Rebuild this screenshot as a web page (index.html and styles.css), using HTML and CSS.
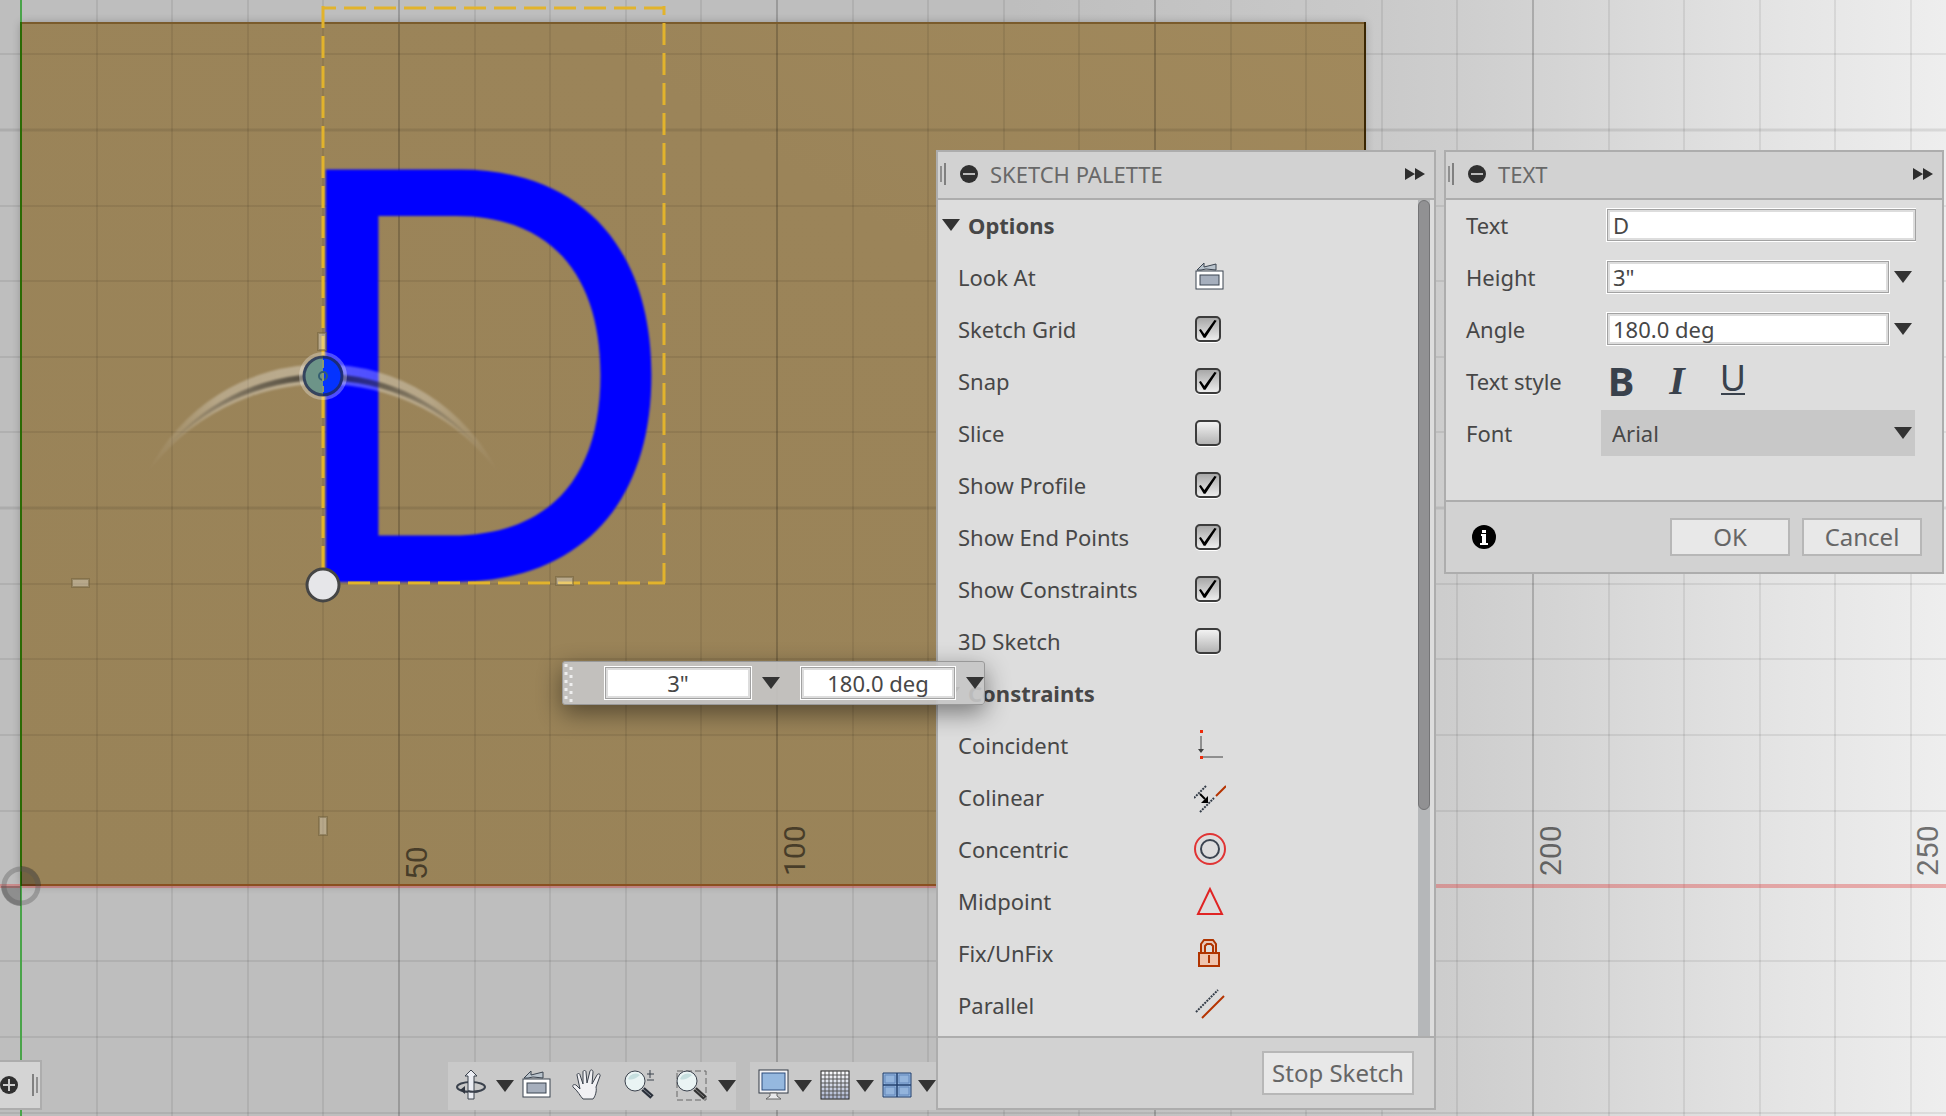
FILE: index.html
```html
<!DOCTYPE html>
<html lang="en">
<head>
<meta charset="utf-8">
<title>Sketch</title>
<link rel="stylesheet" href="styles.css">
</head>
<body>
<main class="workspace">
  <svg class="scene" aria-label="Sketch canvas">
    <defs>
      <linearGradient id="stock" x1="0" y1="1" x2="1" y2="0"><stop offset="0" stop-color="#998358"/><stop offset=".7" stop-color="#9b8459"/><stop offset="1" stop-color="#a1895c"/></linearGradient>
      <linearGradient id="arc" gradientUnits="userSpaceOnUse" x1="147" y1="0" x2="499" y2="0"><stop offset="0" stop-color="#fff" stop-opacity="0"/><stop offset=".2" stop-color="#fff" stop-opacity=".28"/><stop offset=".5" stop-color="#fff" stop-opacity=".34"/><stop offset=".8" stop-color="#fff" stop-opacity=".28"/><stop offset="1" stop-color="#fff" stop-opacity="0"/></linearGradient>
      <linearGradient id="core" gradientUnits="userSpaceOnUse" x1="160" y1="0" x2="486" y2="0"><stop offset="0" stop-opacity="0"/><stop offset=".3" stop-opacity=".4"/><stop offset=".5" stop-opacity=".6"/><stop offset=".7" stop-opacity=".4"/><stop offset="1" stop-opacity="0"/></linearGradient>
      <filter id="shade" x="-5%" y="-5%" width="110%" height="110%"><feGaussianBlur stdDeviation="5"/></filter>
      <filter id="soft"><feGaussianBlur stdDeviation="1"/></filter>
    </defs>
    <rect x="21" y="23" width="1344" height="862" fill="#000" opacity=".25" filter="url(#shade)"/>
    <rect x="21" y="22" width="1344" height="864" fill="url(#stock)"/>
    <path class="grid" d="M97 0V1200M172 0V1200M248 0V1200M323 0V1200M475 0V1200M550 0V1200M626 0V1200M701 0V1200M853 0V1200M928 0V1200M1004 0V1200M1079 0V1200M1231 0V1200M1306 0V1200M1382 0V1200M1457 0V1200M1609 0V1200M1684 0V1200M1760 0V1200M1835 0V1200M1911 0V1200"/>
    <path class="grid" d="M0 54H2400M0 206H2400M0 281H2400M0 357H2400M0 432H2400M0 584H2400M0 659H2400M0 735H2400M0 811H2400M0 961H2400M0 1037H2400M0 1113H2400"/>
    <path class="grid wide" d="M0 130H2400M0 508H2400"/>
    <path class="grid major" d="M399 0V1200M777 0V1200M1155 0V1200M1533 0V1200"/>
    <path d="M21 23H1365" stroke="#7a5b2c" stroke-width="2"/>
    <path d="M1365 22V886" stroke="#3a2602" stroke-width="2"/>
    <path d="M0 886H2400" stroke="#e03030" stroke-opacity=".35" stroke-width="4"/>
    <path d="M21 885H1365" stroke="#8a5020" stroke-width="2"/>
    <path d="M21 0V1200" stroke="#4aa44a" stroke-width="2"/>
    <path d="M21 22V886" stroke="#2a6a04" stroke-width="2"/>
    <g fill="#000" fill-opacity=".25"><path d="M21 886V866A20 20 0 0 1 41 886Z"/><path d="M21 886V906A20 20 0 0 1 1 886Z"/></g>
    <circle cx="21" cy="886" r="17" fill="none" stroke="#555" stroke-opacity=".35" stroke-width="5"/>
    <g class="ruler">
      <text transform="translate(427 880) rotate(-90)">50</text>
      <text transform="translate(805 876) rotate(-90)">100</text>
      <text transform="translate(1561 876) rotate(-90)">200</text>
      <text transform="translate(1938 876) rotate(-90)">250</text>
    </g>
    <text class="sketch-text" x="276" y="582" filter="url(#soft)">D</text>
    <g class="bounds">
      <path d="M323 6V583"/><path d="M322 8H665" stroke-dashoffset="8"/><path d="M664 6V583" stroke-dashoffset="13"/><path d="M322 583H665" stroke-dashoffset="4"/>
    </g>
    <g class="hint"><rect x="72" y="579" width="17" height="8"/><rect x="556" y="577" width="17" height="8"/><rect x="318" y="333" width="8" height="17"/><rect x="319" y="817" width="8" height="18"/></g>
    <path d="M147 474A196 196 0 0 1 499 474A217 217 0 0 0 147 474Z" fill="url(#arc)" filter="url(#soft)"/>
    <path d="M160 456A203 203 0 0 1 486 456A213 213 0 0 0 160 456Z" fill="url(#core)" filter="url(#soft)"/>
    <circle cx="323" cy="376" r="24" fill="#fff" fill-opacity=".3"/>
    <path d="M323 356A20 20 0 0 0 323 396Z" fill="#6d9488"/><path d="M323 356A20 20 0 0 1 323 396Z" fill="#0433ff"/>
    <circle cx="323" cy="376" r="19" fill="none" stroke="#222a50" stroke-opacity=".75" stroke-width="3"/>
    <circle cx="323" cy="376" r="4" fill="none" stroke="#345e70" stroke-width="2"/><path d="M323 360V392" stroke="#8a9a70" stroke-width="2" stroke-dasharray="8 5"/>
    <circle cx="323" cy="585" r="16" fill="#e6e6e9" stroke="#454545" stroke-width="3"/>
  </svg>

  <footer class="dock">
    <aside class="collapsed">
      <button class="round" aria-label="Expand browser"><svg width="18" height="18"><circle cx="9" cy="9" r="9" fill="#303030"/><path d="M3 9H15M9 3V15" stroke="#ccc" stroke-width="2"/></svg></button>
      <i class="grip flip"></i>
    </aside>
    <nav class="tools">
      <div class="group">
        <button class="tool" aria-label="Orbit"><svg width="32" height="32" viewBox="0 0 32 32"><ellipse cx="16" cy="18" rx="14" ry="5" fill="none" stroke="#3b424d" stroke-width="2"/><path d="M16 1L10 7H13V30H19V7H22Z" fill="#eceef4" stroke="#3b424d"/><path d="M13 22C16 23 20 23 24 22" fill="none" stroke="#3b424d" stroke-width="2"/><path d="M5 21L10 17V25Z" fill="#303640"/></svg></button>
        <button class="caret" aria-label="Orbit options"></button>
        <button class="tool" aria-label="Look At"><svg width="32" height="32" viewBox="0 0 32 32"><use href="#look"/></svg></button>
        <button class="tool mid" aria-label="Pan"><svg width="32" height="32" viewBox="0 0 32 32"><path d="M12 30C9 27 7 22 2 18C1 16 3 15 5 16L9 20L6 6C6 4 9 4 9 6L12 15L12 3C12 1 15 1 15 3L16 14L19 2C20 0 22 1 22 3L21 15L26 6C27 4 30 5 29 7L25 18C26 22 24 28 22 30Z" fill="#f1f1f4" stroke="#3b424d" stroke-width="1"/></svg></button>
        <button class="tool mid" aria-label="Zoom"><svg width="32" height="32" viewBox="0 0 32 32"><path d="M20 20L29 28" stroke="#2a303a" stroke-width="5"/><path d="M20 20L28 27" stroke="#858b94" stroke-width="1"/><circle cx="12" cy="12" r="10" fill="#eaf4f4" stroke="#3b424d"/><path d="M5 10A8 8 0 0 1 17 6Q10 12 5 10" fill="#c6dfdf"/><path d="M24 5H31M27 1V9M24 11H31" stroke="#3b424d"/></svg></button>
        <button class="tool mid" aria-label="Zoom Window"><svg width="32" height="32" viewBox="0 0 32 32"><rect x="2" y="2" width="29" height="29" fill="none" stroke="#666" stroke-dasharray="6 3"/><path d="M20 20L30 29" stroke="#333" stroke-width="5"/><path d="M20 20L29 28" stroke="#858585"/><circle cx="12" cy="12" r="10" fill="#eaf4f4" stroke="#3b424d"/><path d="M5 10A8 8 0 0 1 17 6Q10 12 5 10" fill="#c6dfdf"/></svg></button>
        <button class="caret" aria-label="Zoom options"></button>
      </div>
      <div class="group">
        <button class="tool slim" aria-label="Display Settings"><svg width="32" height="32" viewBox="0 0 32 32"><rect x="2" y="1" width="29" height="23" fill="#f4f4f6" stroke="#333b46"/><rect x="5" y="4" width="23" height="17" fill="#95b8df" stroke="#2a4a7a"/><path d="M13 24H20V27L24 30H9L13 27Z" fill="#e8e8ea" stroke="#666"/></svg></button>
        <button class="caret" aria-label="Display options"></button>
        <button class="tool slim" aria-label="Grid and Snaps"><svg width="32" height="32" viewBox="0 0 32 32"><defs><linearGradient id="g" x2="0" y2="1"><stop stop-color="#fff"/><stop offset="1" stop-color="#aab4d0"/></linearGradient></defs><rect x="2" y="2" width="28" height="28" fill="url(#g)" stroke="#222"/><path d="M6 2V30M10 2V30M14 2V30M18 2V30M22 2V30M26 2V30M2 6H30M2 10H30M2 14H30M2 18H30M2 22H30M2 26H30" stroke="#555"/></svg></button>
        <button class="caret" aria-label="Grid options"></button>
        <button class="tool slim" aria-label="Viewports"><svg width="32" height="32" viewBox="0 0 32 32"><g fill="#93b4dc" stroke="#22406e"><path d="M2 4H16V16H2ZM16 4H30V16H16ZM2 16H16V28H2ZM16 16H30V28H16Z"/></g><path d="M4 6H14V14H4ZM18 6H28V14H18ZM4 18H14V26H4ZM18 18H28V26H18Z" fill="none" stroke="#6489bd"/></svg></button>
        <button class="caret" aria-label="Viewport options"></button>
      </div>
    </nav>
  </footer>

  <div class="panels">
    <section class="panel palette">
      <header class="bar"><i class="grip"></i><button class="round" aria-label="Collapse"><svg width="18" height="18"><circle cx="9" cy="9" r="9" fill="#303030"/><path d="M3 9H15" stroke="#bbb" stroke-width="2"/></svg></button><h2>SKETCH PALETTE</h2><button class="dock-btn" aria-label="Dock"><svg width="20" height="12"><path d="M0 0L10 6L0 12ZM10 0L20 6L10 12Z" fill="#2e2e2e"/></svg></button></header>
      <div class="scroll">
        <div class="rows">
          <h3><button class="section"><i class="tri"></i>Options</button></h3>
          <div class="row"><label for="look-at">Look At</label><button id="look-at" class="pick" aria-label="Look At"><svg width="32" height="32" viewBox="0 0 32 32"><g id="look"><path d="M3 9L10 2V6L22 3V9L12 8L7 9Z" fill="#b9c3cc" stroke="#3b4450"/><rect x="2" y="10" width="27" height="18" fill="#fff" stroke="#3b4450"/><rect x="6" y="14" width="19" height="10" fill="#a6afbd" stroke="#3b4450"/></g></svg></button></div>
          <div class="row"><label for="c1">Sketch Grid</label><input id="c1" type="checkbox" checked></div>
          <div class="row"><label for="c2">Snap</label><input id="c2" type="checkbox" checked></div>
          <div class="row"><label for="c3">Slice</label><input id="c3" type="checkbox"></div>
          <div class="row"><label for="c4">Show Profile</label><input id="c4" type="checkbox" checked></div>
          <div class="row"><label for="c5">Show End Points</label><input id="c5" type="checkbox" checked></div>
          <div class="row"><label for="c6">Show Constraints</label><input id="c6" type="checkbox" checked></div>
          <div class="row"><label for="c7">3D Sketch</label><input id="c7" type="checkbox"></div>
          <h3><button class="section"><i class="tri"></i>Constraints</button></h3>
          <div class="row"><label for="k1">Coincident</label><button id="k1" class="pick"><svg width="32" height="32" viewBox="0 0 32 32"><path d="M7 7V22M9 28H29" stroke="#404040"/><path d="M4 20H10L7 24Z" fill="#404040"/><path d="M6 1H9V4H6ZM6 27H9V30H6Z" fill="#ee2a0a"/></svg></button></div>
          <div class="row"><label for="k2">Colinear</label><button id="k2" class="pick"><svg width="32" height="32" viewBox="0 0 32 32"><path d="M0 17L12 5M6 31L20 17" stroke="#333c48" stroke-width="2" stroke-dasharray="2 1"/><path d="M22 15L32 5" stroke="#b53300" stroke-width="2"/><path d="M6 13L11 18" stroke="#000" stroke-width="2"/><path d="M14 15V22H7Z" fill="#000"/></svg></button></div>
          <div class="row"><label for="k3">Concentric</label><button id="k3" class="pick"><svg width="32" height="32" viewBox="0 0 32 32"><circle cx="16" cy="16" r="15" fill="none" stroke="#e03434" stroke-width="2"/><circle cx="16" cy="16" r="9" fill="none" stroke="#3b4450" stroke-width="2"/></svg></button></div>
          <div class="row"><label for="k4">Midpoint</label><button id="k4" class="pick"><svg width="32" height="32" viewBox="0 0 32 32"><path d="M16 4L4 29H28Z" fill="none" stroke="#e02424" stroke-width="2"/></svg></button></div>
          <div class="row"><label for="k5">Fix/UnFix</label><button id="k5" class="pick"><svg width="32" height="32" viewBox="0 0 32 32"><path d="M7 16V7L10 3H19L22 7V16" fill="#e8c8b8" stroke="#b03400" stroke-width="2"/><path d="M11 15V9L13 7H17L19 9V15" fill="#ddd" stroke="#b03400" stroke-width="2"/><rect x="5" y="16" width="20" height="13" fill="#efc4ae" stroke="#b03400" stroke-width="2"/><path d="M15 18V26" stroke="#b03400" stroke-width="2"/></svg></button></div>
          <div class="row"><label for="k6">Parallel</label><button id="k6" class="pick"><svg width="32" height="32" viewBox="0 0 32 32"><path d="M2 23L24 1" stroke="#333c48" stroke-width="2" stroke-dasharray="2 1"/><path d="M8 29L30 7" stroke="#b53300" stroke-width="2"/></svg></button></div>
        </div>
        <div class="track"><div class="thumb"></div></div>
      </div>
      <footer class="actions"><button class="btn">Stop Sketch</button></footer>
    </section>

    <form class="panel props">
      <header class="bar"><i class="grip"></i><button type="button" class="round" aria-label="Collapse"><svg width="18" height="18"><circle cx="9" cy="9" r="9" fill="#303030"/><path d="M3 9H15" stroke="#bbb" stroke-width="2"/></svg></button><h2>TEXT</h2><button type="button" class="dock-btn" aria-label="Dock"><svg width="20" height="12"><path d="M0 0L10 6L0 12ZM10 0L20 6L10 12Z" fill="#2e2e2e"/></svg></button></header>
      <div class="fields">
        <div class="field"><label for="t">Text</label><input id="t" class="box open" value="D"></div>
        <div class="field"><label for="h">Height</label><input id="h" class="box" value="3&quot;"><button type="button" class="caret" aria-label="Height options"></button></div>
        <div class="field"><label for="a">Angle</label><input id="a" class="box" value="180.0 deg"><button type="button" class="caret" aria-label="Angle options"></button></div>
        <div class="field"><span>Text style</span><div class="styles"><button type="button" class="bold">B</button><button type="button" class="italic">I</button><button type="button" class="under">U</button></div></div>
        <div class="field"><label for="f">Font</label><div class="select"><select id="f"><option>Arial</option></select><i class="tri"></i></div></div>
      </div>
      <footer class="actions"><button type="button" class="info" aria-label="Info"><svg width="24" height="24"><circle cx="12" cy="12" r="12"/><path d="M9 9H14V18H16V20H8V18H10V11H9ZM10 5H14V8H10Z" fill="#fff"/></svg></button><button type="button" class="btn half">OK</button><button type="button" class="btn half">Cancel</button></footer>
    </form>
  </div>

  <div class="minibar">
    <svg class="dots" width="12" height="42"><path d="M3 2V42M8 5V42" stroke="#eee" stroke-width="3" stroke-dasharray="3 5"/></svg>
    <input class="box first" aria-label="Height" value="3&quot;"><button class="caret" aria-label="Height options"></button>
    <input class="box" aria-label="Angle" value="180.0 deg"><button class="caret" aria-label="Angle options"></button>
  </div>
</main>
</body>
</html>
```
FILE: styles.css
```css
* { box-sizing: border-box; }
body { margin: 0; font: 22px/28px "Noto Sans", "Open Sans", sans-serif; color: #474747; }
button, input, select { font: inherit; color: inherit; }
button { padding: 0; border: 0; background: none; display: flex; align-items: center; justify-content: center; }
h2, h3 { margin: 0; font-size: 22px; }
svg { display: block; }

.workspace { position: relative; height: 100vh; overflow: hidden; background: linear-gradient(90deg, #bebebe 52%, #c9c9c9 70%, #cecece 75%, #d4d4d4 80%, #e5e5e5 92%, #eee); }
.scene { position: absolute; inset: 0; width: 100%; height: 100%; }
.grid { stroke: #000; stroke-opacity: .07; stroke-width: 2; }
.grid.wide { stroke-width: 3; stroke-opacity: .09; }
.grid.major { stroke-opacity: .19; }
.ruler { font: 30px Roboto, sans-serif; fill: #000; fill-opacity: .55; }
.sketch-text { font: 567px Inter, sans-serif; fill: #00f; }
.bounds { fill: none; stroke: #e2b32c; stroke-width: 3; stroke-dasharray: 22 8; }
.hint { fill: #fff; fill-opacity: .3; stroke: #70603c; stroke-opacity: .5; stroke-width: 2; }

.dock { position: absolute; left: 0; bottom: 6px; display: flex; gap: 406px; align-items: flex-end; }
.collapsed { display: flex; align-items: center; justify-content: space-between; width: 42px; height: 50px; padding-right: 2px; background: #d4d4d4; border: 2px solid #adadad; border-left: 0; }
.tools { display: flex; gap: 14px; height: 48px; }
.group { display: flex; background: #c9c9c9; }
.tool { width: 48px; padding: 0 2px 2px 0; }
.tool.mid { width: 52px; }
.tool.slim { width: 44px; padding: 0 0 2px 2px; }
.caret { flex: none; width: 18px; }
.caret::before, .tri { content: ""; width: 0; height: 0; border: 9px solid transparent; border-top: 12px solid #333; border-bottom: 0; }
.grip { width: 6px; height: 22px; border-right: 2px solid #808080; background: linear-gradient(#909090, #909090) 0 50% / 2px 16px no-repeat; }
.grip.flip { border-right: 0; border-left: 2px solid #808080; background-position: 100% 50%; }

.panels { position: absolute; top: 150px; right: 2px; bottom: 6px; display: flex; align-items: flex-start; gap: 8px; }
.panel { display: flex; flex-direction: column; width: 500px; background: #ddd; border: 2px solid #adadad; }
.palette { height: 100%; }
.bar { flex: none; display: flex; align-items: center; height: 48px; padding: 0 9px 2px 2px; background: #d2d2d2; border-bottom: 2px solid #adadad; }
.bar .round { margin: 0 12px 0 14px; }
.bar h2 { flex: 1; font-weight: 400; color: #686868; }
.scroll { flex: 1; min-height: 0; display: flex; padding-right: 4px; overflow: hidden; }
.rows { flex: 1; }
.rows h3 { display: flex; height: 52px; padding: 0 0 2px 4px; }
.section { gap: 8px; font-weight: 700; }
.row { display: grid; grid-template-columns: 236px 1fr; align-items: center; height: 52px; padding: 0 0 2px 20px; }
.pick { width: 32px; height: 32px; }
.track { width: 12px; background: #b5b7b9; }
.thumb { height: 73%; border: 1px solid #747476; border-radius: 6px; background: #919193; }
input[type=checkbox] { appearance: none; width: 26px; height: 26px; margin: 0 1px; border: 2px solid #3c3c3c; border-radius: 5px; background: linear-gradient(#f2f2f2, #b4b4b4); box-shadow: 0 1px 0 #fff; }
input[type=checkbox]:checked { display: grid; place-items: center; background: linear-gradient(#a8a8a8, #ededed); }
input[type=checkbox]:checked::before { content: ""; width: 18px; height: 18px; background: #000; clip-path: polygon(0 56%, 10% 50%, 30% 78%, 86% 0, 98% 4%, 36% 98%, 26% 98%); }
.actions { flex: none; display: flex; align-items: center; justify-content: flex-end; height: 72px; padding-right: 20px; background: #d2d2d2; border-top: 2px solid #adadad; }
.btn { width: 152px; height: 44px; border: 2px solid #b7b7b7; background: #e8e8e8; color: #666; font-size: 24px; }
.btn.half { width: 120px; height: 38px; margin-left: 12px; }
.info { margin: 0 auto 0 26px; }

.fields { height: 300px; padding-left: 20px; }
.field { display: flex; align-items: center; gap: 4px; height: 52px; padding: 0 30px 2px 0; }
.field > :first-child { width: 136px; }
.box { flex: 1; min-width: 0; height: 34px; padding: 0 6px; border: 1px solid #fff; box-shadow: inset 0 0 0 1px #a2a2a2, inset 0 0 0 3px #ddd; background: #fff; }
.box.open { margin-right: -4px; border-right: 0; }
.styles { display: flex; gap: 32px; padding-left: 3px; }
.styles button { width: 24px; height: 36px; color: #39414c; font-size: 40px; line-height: 36px; }
.bold { font-weight: 700; }
.styles .italic { font-family: "Liberation Serif", serif; font-style: italic; font-weight: 700; }
.styles .under { height: 32px; font-size: 36px; line-height: 30px; border-bottom: 2px solid #39414c; }
.select { flex: 1; display: grid; margin: 0 -3px 0 -5px; }
.select > * { grid-area: 1 / 1; }
.select select { appearance: none; height: 46px; padding: 0 11px; border: 0; background: #c8c8c8; }
.select .tri { place-self: center end; margin-right: 3px; pointer-events: none; }

.minibar { position: absolute; left: 562px; top: 661px; display: flex; align-items: center; width: 423px; height: 44px; background: rgba(198, 198, 198, .92); border: 1px solid #999; border-radius: 3px; box-shadow: 0 8px 24px rgba(0, 0, 0, .45); }
.minibar .dots { margin-right: 29px; }
.minibar .box { text-align: center; }
.minibar .first { flex: none; width: 148px; }
.minibar .caret { margin: 0 20px 0 10px; }
.minibar .caret:last-child { margin-right: 0; }
```
